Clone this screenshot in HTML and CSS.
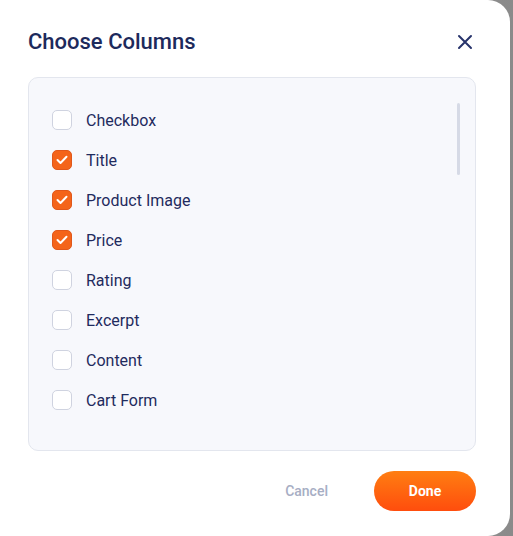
FILE: index.html
```html
<!DOCTYPE html>
<html>
<head>
<meta charset="utf-8">
<link rel="stylesheet" href="styles.css">
</head>
<body>
<div class="modal">
  <div class="header">
    <h2 class="title">Choose Columns</h2>
    <button class="close" aria-label="Close">
      <svg width="16" height="16" viewBox="0 0 16 16"><path d="M2 2L14 14M14 2L2 14" stroke="#27336b" stroke-width="2" stroke-linecap="round"/></svg>
    </button>
  </div>
  <div class="panel">
    <div class="scrollbar"></div>
    <ul class="list">
      <li class="row"><span class="box"></span><span class="label">Checkbox</span></li>
      <li class="row"><span class="box checked"><svg width="12" height="10" viewBox="0 0 12 10"><path d="M1.5 5L4.5 8L10.5 1.8" fill="none" stroke="#fff" stroke-width="2" stroke-linecap="round" stroke-linejoin="round"/></svg></span><span class="label">Title</span></li>
      <li class="row"><span class="box checked"><svg width="12" height="10" viewBox="0 0 12 10"><path d="M1.5 5L4.5 8L10.5 1.8" fill="none" stroke="#fff" stroke-width="2" stroke-linecap="round" stroke-linejoin="round"/></svg></span><span class="label">Product Image</span></li>
      <li class="row"><span class="box checked"><svg width="12" height="10" viewBox="0 0 12 10"><path d="M1.5 5L4.5 8L10.5 1.8" fill="none" stroke="#fff" stroke-width="2" stroke-linecap="round" stroke-linejoin="round"/></svg></span><span class="label">Price</span></li>
      <li class="row"><span class="box"></span><span class="label">Rating</span></li>
      <li class="row"><span class="box"></span><span class="label">Excerpt</span></li>
      <li class="row"><span class="box"></span><span class="label">Content</span></li>
      <li class="row"><span class="box"></span><span class="label">Cart Form</span></li>
    </ul>
  </div>
  <div class="footer">
    <button class="cancel">Cancel</button>
    <button class="done">Done</button>
  </div>
</div>
</body>
</html>
```
FILE: styles.css
```css
html, body {
  margin: 0;
  padding: 0;
}
body {
  background: linear-gradient(90deg, #b8b8b8, #8a8a8a);
  width: 513px;
  height: 536px;
  overflow: hidden;
  font-family: Roboto, "Liberation Sans", sans-serif;
}
.modal {
  width: 510px;
  height: 536px;
  background: #fff;
  border-radius: 0 22px 22px 0;
  box-sizing: border-box;
  padding: 28px 37px 0 28px;
}
.header {
  display: flex;
  align-items: center;
  justify-content: space-between;
  height: 28px;
}
.title {
  margin: 0;
  font-size: 22px;
  font-weight: 500;
  color: #1d2a5c;
  line-height: 28px;
}
.close {
  border: 0;
  background: none;
  padding: 0;
  width: 16px;
  height: 16px;
  display: flex;
}
.panel {
  position: relative;
  margin-top: 21px;
  width: 448px;
  height: 374px;
  box-sizing: border-box;
  background: #f7f8fc;
  border: 1px solid #e3e6ee;
  border-radius: 10px;
  padding: 22px 23px 0 23px;
}
.scrollbar {
  position: absolute;
  right: 15px;
  top: 25px;
  width: 3px;
  height: 72px;
  background: #d6dae6;
  border-radius: 2px;
}
.list {
  list-style: none;
  margin: 0;
  padding: 0;
}
.row {
  display: flex;
  align-items: center;
  height: 40px;
  gap: 14px;
}
.box {
  width: 20px;
  height: 20px;
  box-sizing: border-box;
  border: 1px solid #cfd3e0;
  border-radius: 5px;
  background: #fff;
  display: flex;
  align-items: center;
  justify-content: center;
}
.box.checked {
  background: #f4641a;
  border-color: #e0571a;
}
.label {
  font-size: 16px;
  color: #1f2b5e;
}
.footer {
  display: flex;
  justify-content: flex-end;
  align-items: center;
  margin-top: 20px;
  width: 448px;
}
.cancel {
  border: 0;
  background: none;
  font-family: inherit;
  font-size: 14px;
  font-weight: 500;
  color: #a7aec4;
  padding: 0;
  margin-right: 46px;
}
.done {
  width: 102px;
  height: 40px;
  border: 0;
  border-radius: 20px;
  background: linear-gradient(180deg, #ff7e12, #ff4d0d);
  color: #fff;
  font-family: inherit;
  font-size: 14px;
  font-weight: 700;
  padding: 0;
}
```
